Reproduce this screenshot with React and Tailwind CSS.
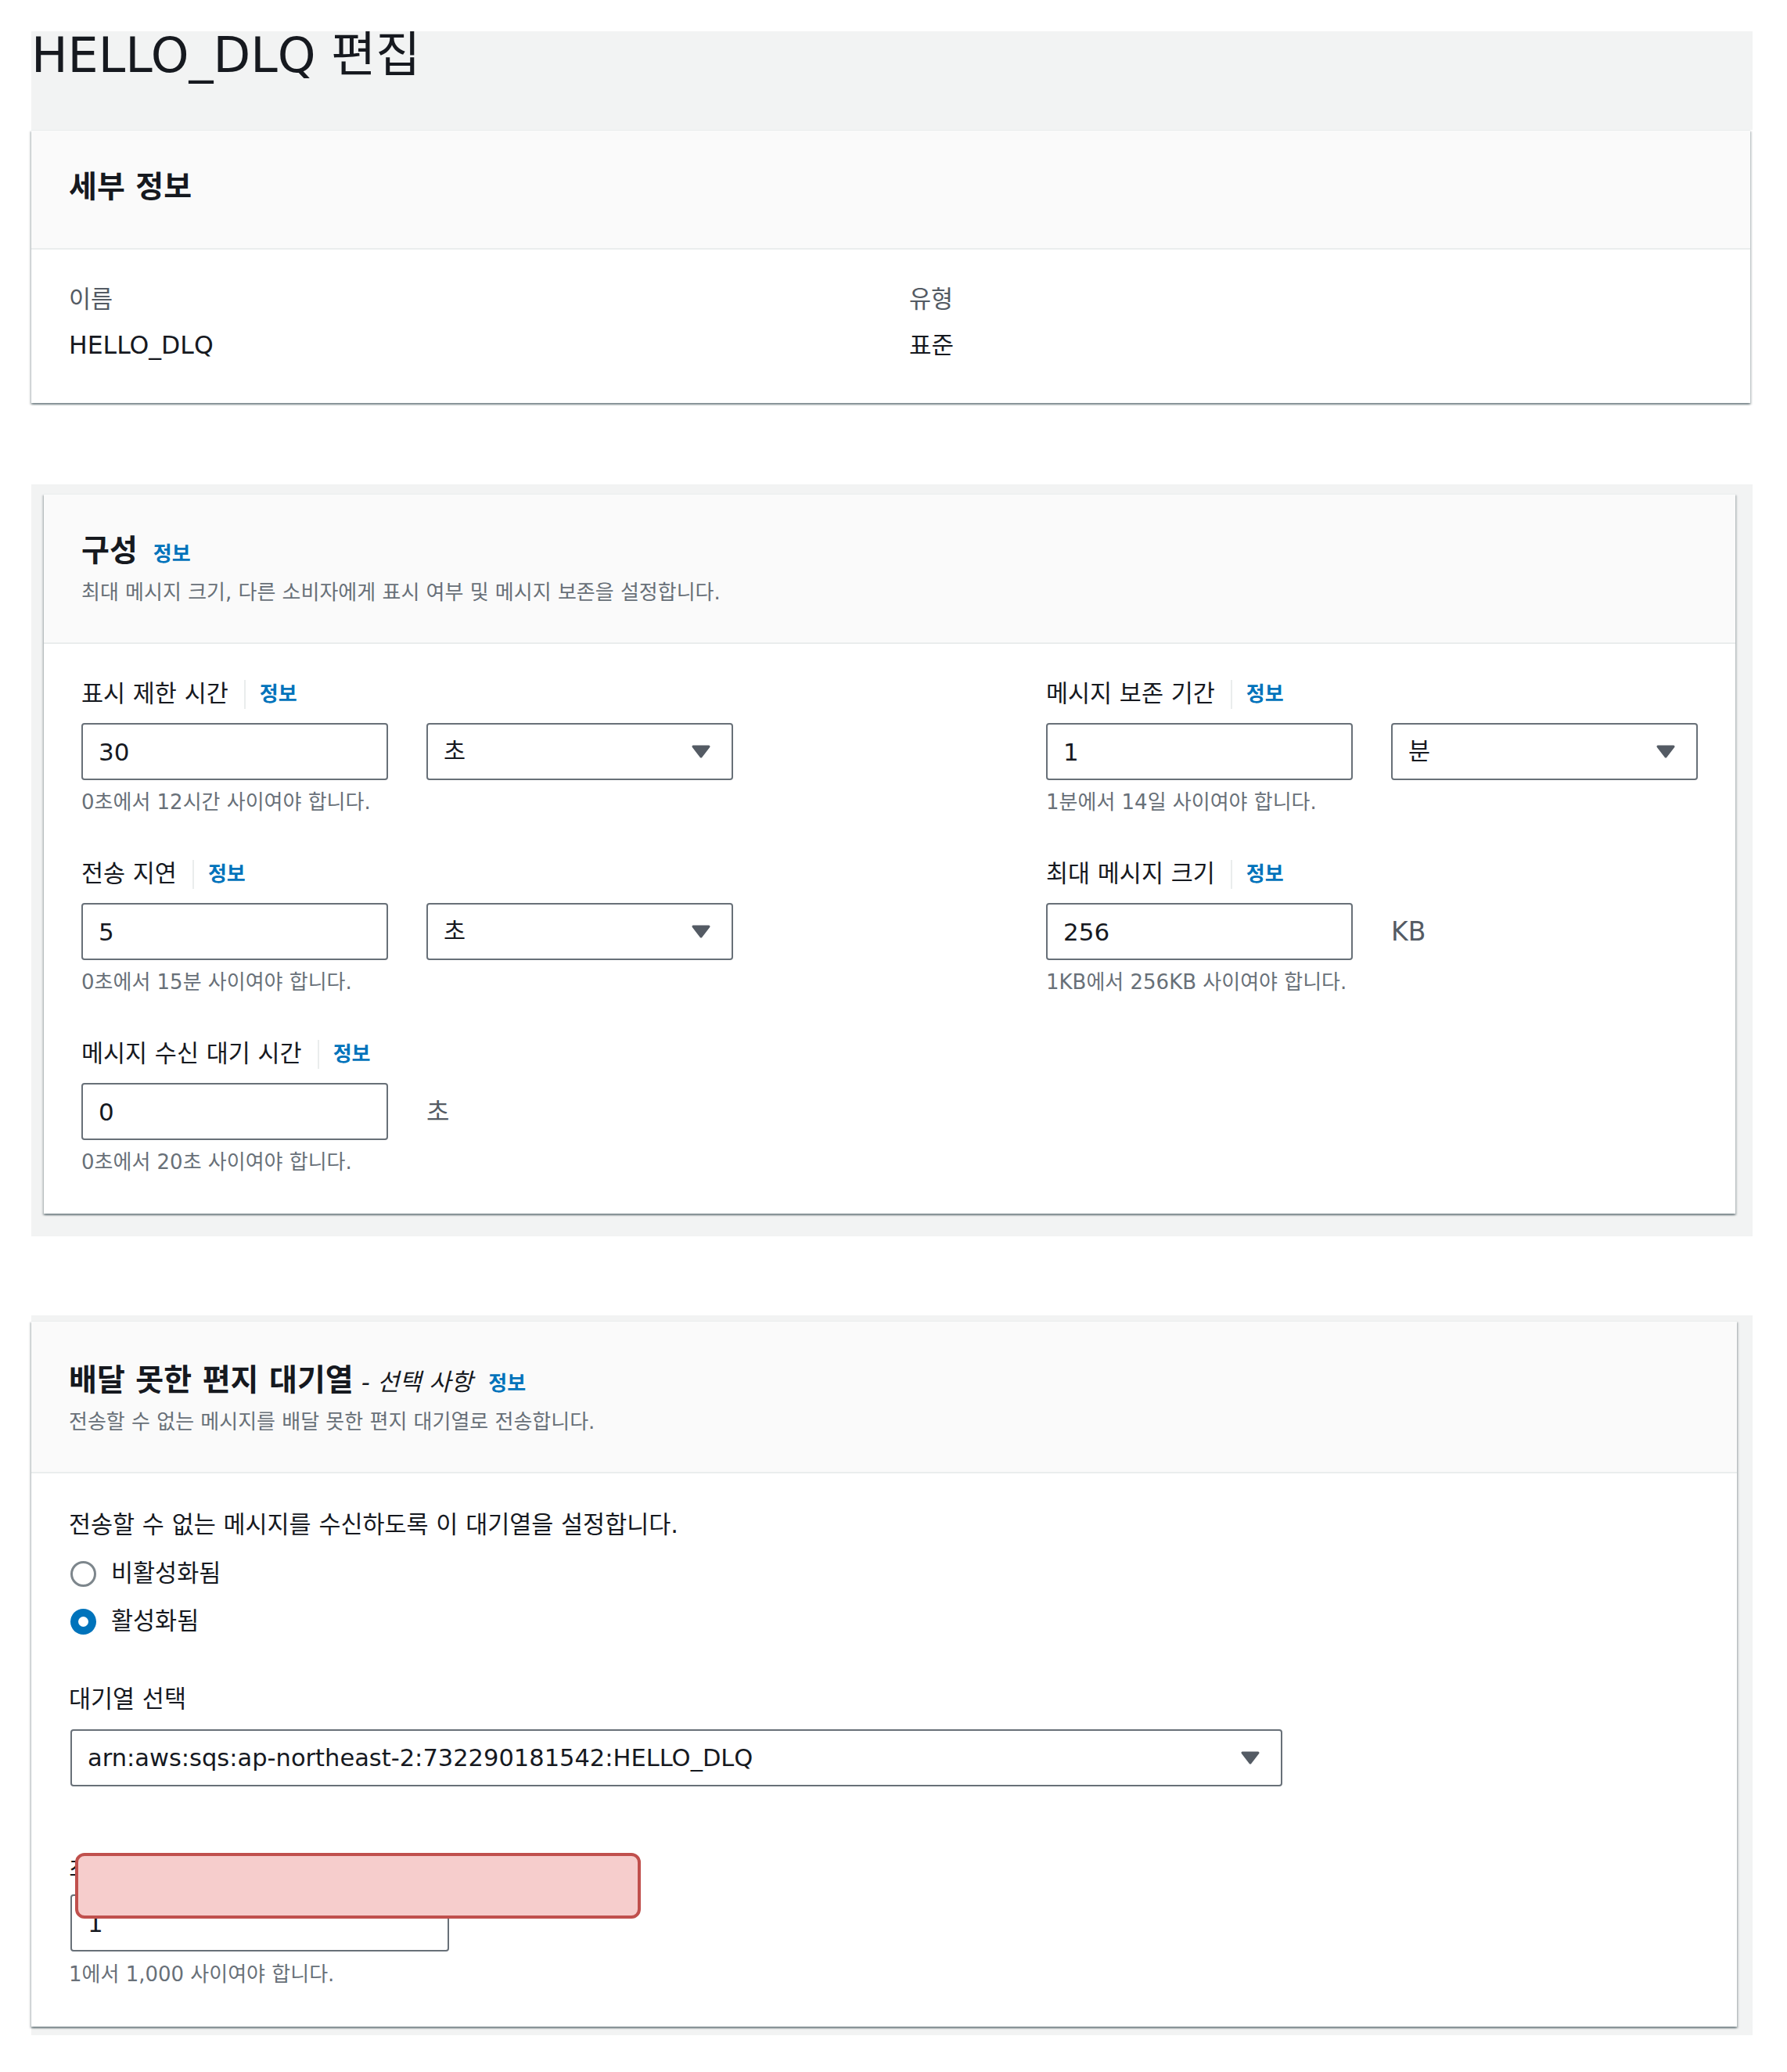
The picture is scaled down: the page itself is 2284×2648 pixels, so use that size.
import React from 'react';

// colours taken from the console screenshot
const cardShadow =
  'shadow-[0_2px_2px_0_rgba(0,28,36,0.35),2px_2px_2px_0_rgba(0,28,36,0.15),-2px_2px_2px_0_rgba(0,28,36,0.15)]';

function InfoLink({ sep }) {
  if (sep) {
    return (
      <span className="ml-[20px] flex h-[37px] items-center border-l-2 border-[#eaeded] pl-[18px] text-[26px] font-bold text-[#0073bb]">
        정보
      </span>
    );
  }
  return <span className="ml-[20px] text-[26px] font-bold text-[#0073bb]">정보</span>;
}

function Caret() {
  return (
    <svg width="26" height="19" viewBox="0 0 26 19" className="shrink-0">
      <path d="M3 3 L23 3 L13 16 Z" fill="#545b64" stroke="#545b64" strokeWidth="3" strokeLinejoin="round" />
    </svg>
  );
}

function TextBox({ value, width = 'w-[392px]' }) {
  return (
    <input
      type="text"
      readOnly
      defaultValue={value}
      className={`h-[73px] ${width} rounded-[4px] border-2 border-[#687078] bg-white px-[20px] text-[31px] text-[#16191f] outline-none`}
    />
  );
}

function SelectBox({ value, width = 'w-[392px]' }) {
  return (
    <div
      className={`flex h-[73px] ${width} items-center justify-between rounded-[4px] border-2 border-[#687078] bg-white pl-[20px] pr-[26px] text-[30.5px] text-[#16191f]`}
    >
      <span>{value}</span>
      <Caret />
    </div>
  );
}

function Field({ label, hint, children }) {
  return (
    <div className="flex flex-col">
      <div className="flex h-[40px] items-center">
        <span className="text-[30.5px] leading-[40px] text-[#16191f]">{label}</span>
        <InfoLink sep />
      </div>
      <div className="mt-[17px] flex items-center gap-[49px]">{children}</div>
      <div className="mt-[10px] h-[36px] text-[26px] leading-[36px] text-[#687078]">{hint}</div>
    </div>
  );
}

function Unit({ children, size = 'text-[32px]' }) {
  return <span className={`${size} text-[#545b64]`}>{children}</span>;
}

function CardHeader({ title, extra, desc, top = 'pt-[48px]' }) {
  return (
    <div className={`border-b-2 border-[#eaeded] bg-[#fafafa] px-[48px] ${top} pb-[46px]`}>
      <div className="flex h-[48px] items-baseline">
        <h2 className="text-[39px] font-bold leading-[48px] text-[#16191f]">{title}</h2>
        {extra}
        <InfoLink />
      </div>
      <p className="mt-[11px] h-[36px] text-[26px] leading-[36px] text-[#687078]">{desc}</p>
    </div>
  );
}

function Radio({ checked, label, className = '' }) {
  return (
    <div className={`flex h-[40px] items-center ${className}`}>
      {checked ? (
        <span className="ml-[2px] flex h-[33px] w-[33px] items-center justify-center rounded-full bg-[#0073bb]">
          <span className="h-[13px] w-[13px] rounded-full bg-white" />
        </span>
      ) : (
        <span className="ml-[2px] h-[33px] w-[33px] rounded-full border-[3px] border-[#7d868c] bg-white" />
      )}
      <span className="ml-[19px] text-[30.5px] text-[#16191f]">{label}</span>
    </div>
  );
}

export default function App() {
  return (
    <div className="min-h-[2648px] bg-white pb-[46px] pl-[40px] pr-[44px] pt-[40px] font-['DejaVu_Sans','Noto_Sans_CJK_KR',sans-serif] text-[#16191f]">
      {/* page header */}
      <div className="h-[126px] bg-[#f2f3f3]">
        <h1 className="text-[62px] leading-none text-[#16191f]">HELLO_DLQ 편집</h1>
      </div>

      {/* details card */}
      <div className={`w-[2197px] border-t border-[#eaeded] bg-white ${cardShadow}`}>
        <div className="border-b-2 border-[#eaeded] bg-[#fafafa] px-[48px] pb-[54px] pt-[48px]">
          <h2 className="text-[39px] font-bold leading-[48px] text-[#16191f]">세부 정보</h2>
        </div>
        <div className="grid grid-cols-2 gap-x-[47px] px-[48px] pb-[54px] pt-[44px]">
          <div>
            <div className="h-[40px] text-[30.5px] leading-[40px] text-[#545b64]">이름</div>
            <div className="mt-[18px] h-[40px] text-[31.5px] leading-[40px]">HELLO_DLQ</div>
          </div>
          <div>
            <div className="h-[40px] text-[30.5px] leading-[40px] text-[#545b64]">유형</div>
            <div className="mt-[18px] h-[40px] text-[31px] leading-[40px]">표준</div>
          </div>
        </div>
      </div>

      {/* configuration */}
      <div className="mt-[104px] bg-[#f2f3f3] pb-[29px] pl-[16px] pr-[22px] pt-[12px]">
        <div className={`border-t border-[#eaeded] bg-white ${cardShadow}`}>
          <CardHeader title="구성" desc="최대 메시지 크기, 다른 소비자에게 표시 여부 및 메시지 보존을 설정합니다." />
          <div className="grid grid-cols-[833px_833px] justify-between gap-y-[54px] px-[48px] pb-[48px] pt-[44px]">
            <Field label="표시 제한 시간" hint="0초에서 12시간 사이여야 합니다.">
              <TextBox value="30" />
              <SelectBox value="초" />
            </Field>
            <Field label="메시지 보존 기간" hint="1분에서 14일 사이여야 합니다.">
              <TextBox value="1" />
              <SelectBox value="분" />
            </Field>
            <Field label="전송 지연" hint="0초에서 15분 사이여야 합니다.">
              <TextBox value="5" />
              <SelectBox value="초" />
            </Field>
            <Field label="최대 메시지 크기" hint="1KB에서 256KB 사이여야 합니다.">
              <TextBox value="256" />
              <Unit size="text-[33px]">KB</Unit>
            </Field>
            <Field label="메시지 수신 대기 시간" hint="0초에서 20초 사이여야 합니다.">
              <TextBox value="0" />
              <Unit>초</Unit>
            </Field>
          </div>
        </div>
      </div>

      {/* dead-letter queue */}
      <div className="mt-[101px] bg-[#f2f3f3] pb-[11px] pr-[20px] pt-[7px]">
        <div className={`border-t border-[#eaeded] bg-white ${cardShadow}`}>
          <CardHeader
            title="배달 못한 편지 대기열"
            top="pt-[51px]"
            extra={<span className="ml-[10px] text-[30.5px] italic text-[#16191f]">- 선택 사항</span>}
            desc="전송할 수 없는 메시지를 배달 못한 편지 대기열로 전송합니다."
          />
          <div className="flex flex-col px-[48px] pb-[49px] pt-[46px]">
            <div className="h-[40px] text-[30.5px] leading-[40px]">전송할 수 없는 메시지를 수신하도록 이 대기열을 설정합니다.</div>
            <Radio className="mt-[22px]" label="비활성화됨" />
            <Radio className="mt-[21px]" checked label="활성화됨" />

            <div className="mt-[60px] h-[40px] text-[30.5px] leading-[40px]">대기열 선택</div>
            <div className="mt-[18px] ml-[2px]">
              <SelectBox value="arn:aws:sqs:ap-northeast-2:732290181542:HELLO_DLQ" width="w-[1549px]" />
            </div>

            <div className="relative mt-[79px]">
              <div className="mt-[8px] h-[40px] text-[30.5px] leading-[40px]">최대 수신 수</div>
              <div className="mt-[11px] ml-[2px]">
                <TextBox value="1" width="w-[484px]" />
              </div>
              {/* annotation box laid over the label */}
              <div className="absolute left-[8px] top-[6px] h-[84px] w-[723px] rounded-[12px] border-4 border-[#c0504d] bg-[#f6cdcc]" />
            </div>
            <div className="mt-[11px] h-[36px] text-[26px] leading-[36px] text-[#687078]">1에서 1,000 사이여야 합니다.</div>
          </div>
        </div>
      </div>
    </div>
  );
}
